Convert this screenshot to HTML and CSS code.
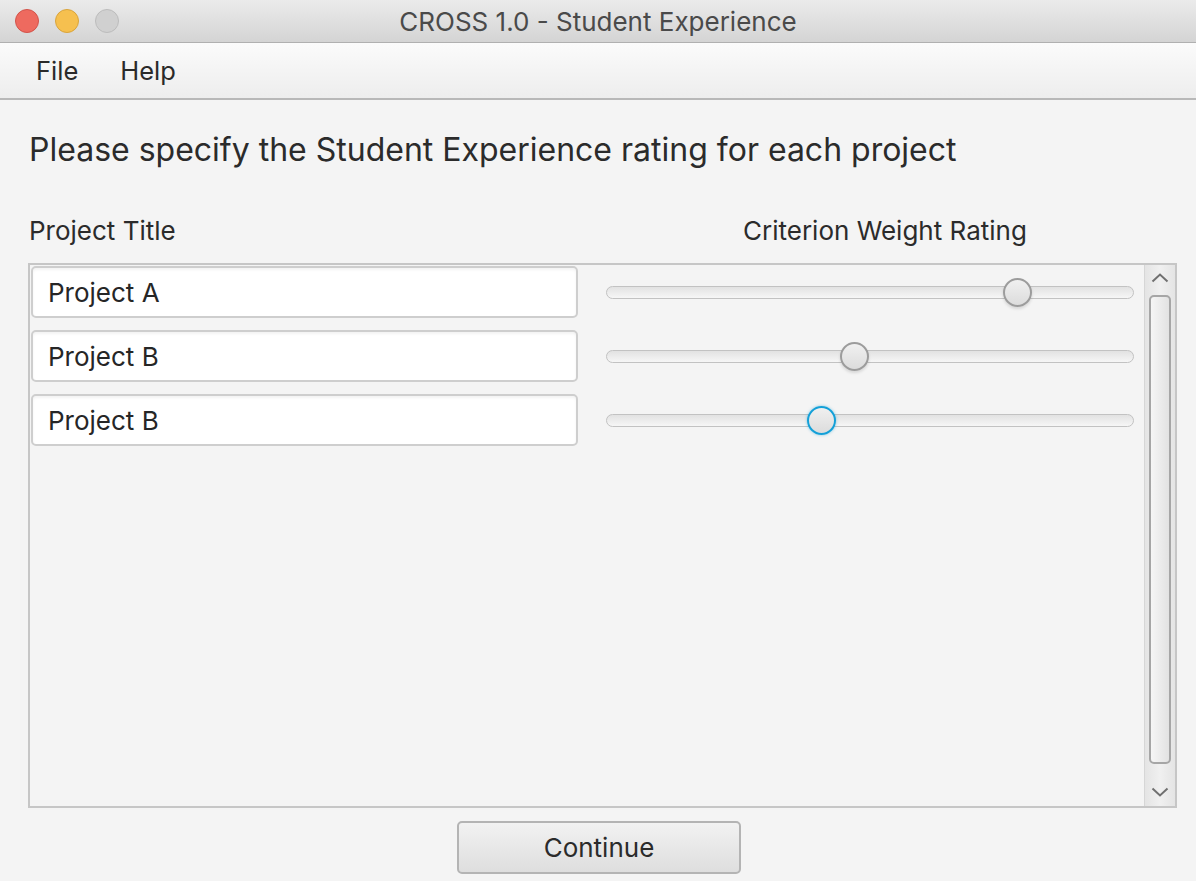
FILE: index.html
```html
<!DOCTYPE html>
<html>
<head>
<meta charset="utf-8">
<link rel="stylesheet" href="styles.css">
</head>
<body>
<div class="window">
  <div class="titlebar">
    <div class="lights">
      <span class="light red"></span>
      <span class="light yellow"></span>
      <span class="light gray"></span>
    </div>
    <div class="title">CROSS 1.0 - Student Experience</div>
  </div>
  <div class="menubar">
    <span class="menu">File</span>
    <span class="menu">Help</span>
  </div>
  <div class="content">
    <h1 class="heading">Please specify the Student Experience rating for each project</h1>
    <div class="colheads">
      <span class="col-title">Project Title</span>
      <span class="col-rating">Criterion Weight Rating</span>
    </div>
    <div class="scrollpane">
      <div class="rows">
        <div class="row">
          <div class="field">Project A</div>
          <div class="slider"><div class="track"></div><div class="thumb" style="left: 77.8%"></div></div>
        </div>
        <div class="row">
          <div class="field">Project B</div>
          <div class="slider"><div class="track"></div><div class="thumb" style="left: 46.9%"></div></div>
        </div>
        <div class="row">
          <div class="field">Project B</div>
          <div class="slider"><div class="track"></div><div class="thumb focused" style="left: 40.8%"></div></div>
        </div>
      </div>
      <div class="vscroll">
        <svg class="arrow" width="18" height="10" viewBox="0 0 18 10"><path d="M1.5 8.5 L9 1.5 L16.5 8.5" fill="none" stroke="#707070" stroke-width="2"/></svg>
        <div class="sthumb"></div>
        <svg class="arrow" width="18" height="10" viewBox="0 0 18 10"><path d="M1.5 1.5 L9 8.5 L16.5 1.5" fill="none" stroke="#707070" stroke-width="2"/></svg>
      </div>
    </div>
    <div class="footer">
      <button class="btn">Continue</button>
    </div>
  </div>
</div>
</body>
</html>
```
FILE: styles.css
```css
* { box-sizing: border-box; }
html, body { margin: 0; padding: 0; }
body {
  width: 1196px;
  height: 881px;
  overflow: hidden;
  background: #f4f4f4;
  font-family: Inter, "Liberation Sans", Arial, sans-serif;
  color: #2b2b2b;
}
.window { width: 1196px; height: 881px; display: flex; flex-direction: column; }
.titlebar {
  position: relative;
  height: 43px;
  background: linear-gradient(#ebebeb, #d4d4d4);
  border-bottom: 1px solid #b0b0b0;
  display: flex;
  align-items: center;
  justify-content: center;
}
.lights {
  position: absolute;
  left: 15px;
  top: 9px;
  display: flex;
  gap: 16px;
}
.light { width: 24px; height: 24px; border-radius: 50%; display: block; }
.red { background: #ee6a5f; border: 1px solid #d2534a; }
.yellow { background: #f6c04f; border: 1px solid #d9a43c; }
.gray { background: #d0d0d0; border: 1px solid #bcbcbc; }
.title { font-size: 26px; color: #4a4a4a; margin-top: 0; }
.menubar {
  height: 57px;
  background: linear-gradient(#fbfbfb, #ededed);
  border-bottom: 2px solid #b8b8b8;
  display: flex;
  align-items: center;
  padding-left: 36px;
  gap: 42px;
}
.menu { font-size: 25.5px; color: #2a2a2a; }
.content {
  flex: 1;
  display: flex;
  flex-direction: column;
  padding: 0 19px 0 28px;
}
.heading {
  margin: 30px 0 0 1px;
  font-weight: normal;
  font-size: 32px;
  line-height: 40px;
  color: #2b2b2b;
}
.colheads {
  display: flex;
  margin-top: 42px;
  height: 36px;
  align-items: center;
  font-size: 26px;
  color: #2b2b2b;
}
.col-title { margin-left: 1px; width: 714px; }
.scrollpane {
  margin-top: 15px;
  height: 545px;
  border: 2px solid #c6c6c6;
  display: flex;
}
.rows {
  flex: 1;
  display: flex;
  flex-direction: column;
  gap: 12px;
  padding: 1px 0 0 1px;
}
.row { display: flex; align-items: center; height: 52px; }
.field {
  width: 547px;
  height: 52px;
  background: #fff;
  border: 2px solid #cecece;
  border-radius: 5px;
  font-size: 26px;
  display: flex;
  align-items: center;
  padding-left: 15px;
  color: #262626;
  box-shadow: inset 0 2px 3px rgba(0,0,0,0.05);
}
.slider {
  position: relative;
  margin-left: 28px;
  width: 528px;
  height: 30px;
}
.track {
  position: absolute;
  left: 0; right: 0; top: 9px;
  height: 13px;
  border-radius: 7px;
  background: linear-gradient(#e2e2e2, #f6f6f6);
  border: 1px solid #c2c2c2;
}
.thumb {
  position: absolute;
  top: 1px;
  width: 29px;
  height: 29px;
  margin-left: -14px;
  border-radius: 50%;
  background: linear-gradient(#f0f0f0, #dcdcdc);
  border: 2px solid #9c9c9c;
  box-shadow: 0 2px 3px rgba(0,0,0,0.12);
}
.thumb.focused {
  border: 2px solid #14a0d8;
  box-shadow: 0 0 3px rgba(20,160,216,0.5);
}
.vscroll {
  width: 31px;
  background: linear-gradient(90deg, #e4e4e4, #f0f0f0, #e4e4e4);
  border-left: 1px solid #d6d6d6;
  display: flex;
  flex-direction: column;
  align-items: center;
  padding: 8px 0 9px;
}
.arrow { flex: none; }
.sthumb {
  flex: 1;
  width: 22px;
  margin: 12px 0 23px;
  border: 2px solid #a6a6a6;
  border-radius: 5px;
  background: linear-gradient(90deg, #f6f6f6, #e2e2e2);
}
.footer {
  display: flex;
  justify-content: center;
  padding-top: 13px;
  padding-right: 7px;
}
.btn {
  width: 284px;
  height: 53px;
  border: 2px solid #b4b4b4;
  border-radius: 5px;
  background: linear-gradient(#f2f2f2, #dedede);
  font-family: Inter, "Liberation Sans", Arial, sans-serif;
  font-size: 26px;
  color: #2b2b2b;
  padding: 0;
}
```
